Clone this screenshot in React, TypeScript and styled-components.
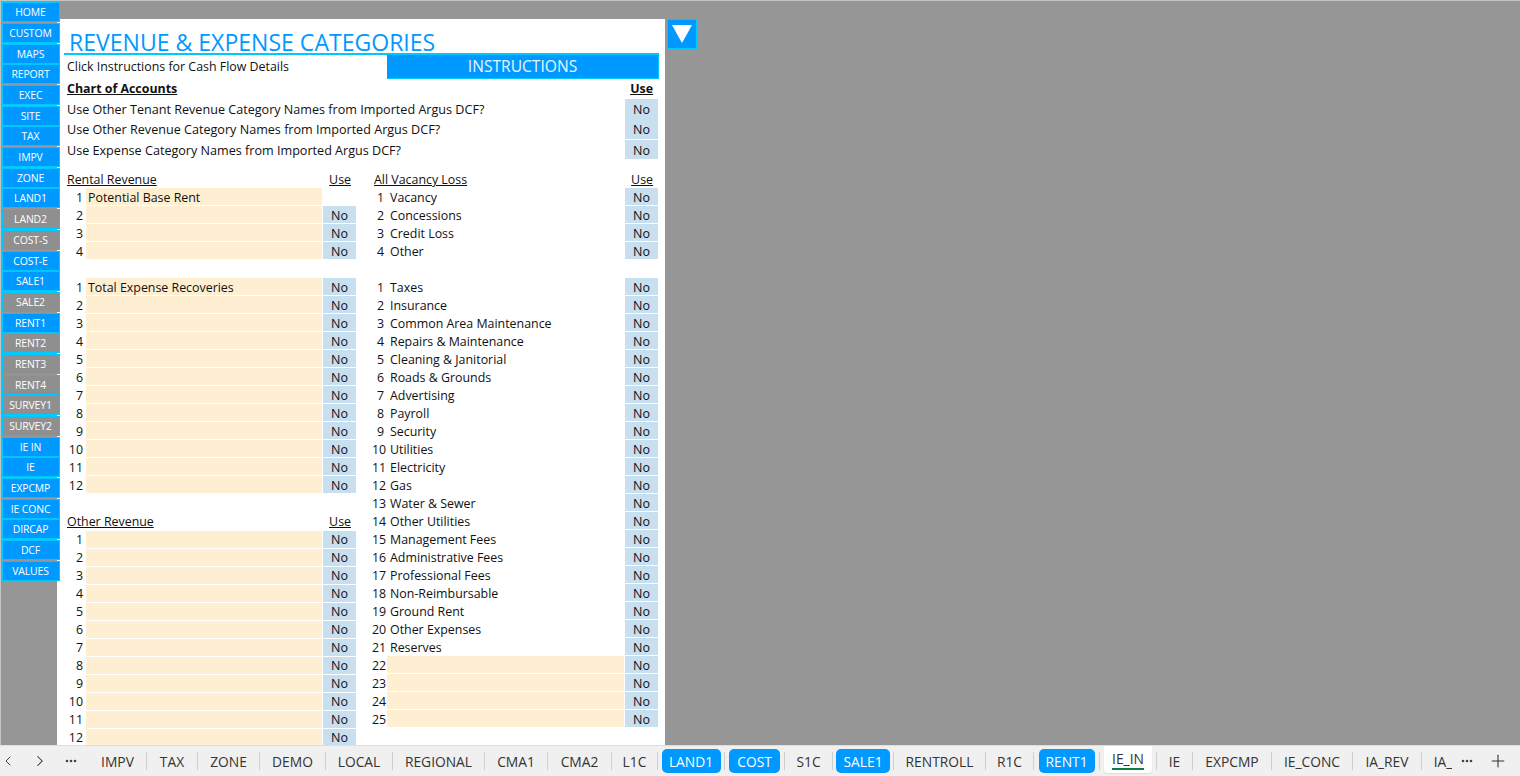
import React from "react";
import styled, { createGlobalStyle } from "styled-components";
import { ChevronLeft, ChevronRight, Plus } from "lucide-react";

const GlobalStyle = createGlobalStyle`
  html, body {
    margin: 0;
    padding: 0;
    overflow: hidden;
    background: #969696;
  }
  * {
    box-sizing: border-box;
  }
`;

const FONT = `"Open Sans", "Noto Sans", "Liberation Sans", sans-serif`;
const BLUE = "#0099ff";
const CYAN = "#00c8ff";
const GRAY = "#969696";

const Root = styled.div`
  width: 1520px;
  height: 776px;
  display: flex;
  flex-direction: column;
  overflow: hidden;
  font-family: ${FONT};
  color: #111;
`;

const Canvas = styled.div`
  flex: 1;
  min-height: 0;
  display: flex;
  background: ${GRAY};
  border-top: 1px solid #c4c4c4;
  border-left: 1px solid #c4c4c4;
`;

const Sidebar = styled.nav`
  width: 56px;
  flex: none;
  padding: 1.3px 0 0 1px;
  display: flex;
  flex-direction: column;
  gap: 0.7px;
  position: relative;
  z-index: 1;
`;

const NavButton = styled.div<{ $off?: boolean }>`
  width: 58px;
  height: 20px;
  flex: none;
  display: flex;
  align-items: center;
  justify-content: center;
  padding-right: 1px;
  background: ${p => (p.$off ? "#8f8f8f" : BLUE)};
  border: 1px solid ${CYAN};
  color: #fff;
  font-size: 10.4px;
  letter-spacing: -0.1px;
`;

const Sheet = styled.main`
  width: 608px;
  height: 726px;
  margin-top: 18px;
  flex: none;
  background: #fff;
  padding: 0 6px 0 7px;
  overflow: hidden;
`;

const Title = styled.h1`
  margin: 0;
  height: 36px;
  padding: 10px 0 0 5px;
  border-bottom: 2px solid ${CYAN};
  color: ${BLUE};
  font-size: 23.05px;
  font-weight: 400;
  line-height: 27px;
  white-space: nowrap;
`;

const InstructionRow = styled.div`
  height: 24px;
  display: flex;
  justify-content: space-between;
  padding-left: 3px;
  font-size: 12.4px;
  line-height: 24px;
`;

const InstructionButton = styled.div`
  width: 272px;
  height: 24px;
  background: ${BLUE};
  border-bottom: 1px solid ${CYAN};
  border-right: 1px solid ${CYAN};
  color: #e6f6ff;
  text-align: center;
  font-size: 15.6px;
  line-height: 22px;
`;

const Block = styled.section`
  padding: 0 1px 0 3px;
`;

const HeadRow = styled.div`
  height: 20px;
  display: flex;
  justify-content: space-between;
  font-size: 12.4px;
  font-weight: 700;
  line-height: 20px;
  text-decoration: underline;
  padding-right: 5px;
`;

const Question = styled.div`
  height: 20.4px;
  display: flex;
  justify-content: space-between;
  font-size: 12.6px;
  line-height: 22px;
`;

const QuestionNo = styled.div`
  width: 33px;
  height: 19.5px;
  background: #c8dfef;
  text-align: center;
  font-size: 12.5px;
  line-height: 22px;
`;

const Columns = styled.div`
  margin-top: 10px;
  display: grid;
  grid-template-columns: 292px 286px;
  column-gap: 16px;
`;

const Column = styled.div`
  display: flex;
  flex-direction: column;
`;

const Group = styled.div<{ $gap?: number; $line?: number }>`
  margin-bottom: ${p => p.$gap ?? 0}px;
  line-height: ${p => p.$line ?? 19}px;
`;

const GroupHead = styled.div<{ $left: number }>`
  height: 18px;
  display: flex;
  justify-content: space-between;
  padding: 0 5px 0 ${p => p.$left}px;
  font-size: 12.4px;
  text-decoration: underline;
`;

const Row = styled.div<{ $numWidth: number }>`
  height: 18px;
  display: grid;
  grid-template-columns: ${p => p.$numWidth}px 1fr 33px;
  column-gap: 1px;
  font-size: 12.4px;
`;

const Num = styled.div`
  text-align: right;
  padding-right: 2px;
`;

const Input = styled.div`
  height: 17px;
  background: #ffefd2;
  padding-left: 2px;
`;

const Label = styled.div`
  padding-left: 3px;
  white-space: nowrap;
`;

const NoCell = styled.div`
  height: 17px;
  background: #c8dfef;
  text-align: center;
  font-size: 12.5px;
`;

const DropButton = styled.div`
  width: 30px;
  height: 30px;
  margin: 18px 0 0 2px;
  flex: none;
  display: flex;
  align-items: center;
  justify-content: center;
  background: ${BLUE};
  border: 1px solid ${CYAN};
`;

const TabBar = styled.footer`
  height: 31px;
  flex: none;
  display: flex;
  align-items: center;
  background: #f0f0f0;
  border-top: 1px solid #dedede;
`;

const NavIcon = styled.div<{ $width: number }>`
  width: ${p => p.$width}px;
  flex: none;
  display: flex;
  align-items: center;
  justify-content: center;
  color: #333;
`;

const TabScroll = styled.div`
  width: 1374px;
  flex: none;
  height: 100%;
  padding-left: 11px;
  display: flex;
  align-items: center;
  overflow: hidden;
`;

const TabSlot = styled.div<{ $width: number }>`
  width: ${p => p.$width}px;
  flex: none;
  height: 100%;
  display: flex;
  align-items: center;
  justify-content: center;
  color: #333;
  font-size: 13.8px;
  white-space: nowrap;
`;

const TabPill = styled.div<{ $width: number }>`
  width: ${p => p.$width}px;
  height: 24px;
  display: flex;
  align-items: center;
  justify-content: center;
  border-radius: 5px;
  background: ${BLUE};
  color: #fff;
`;

const ActiveTab = styled.div`
  width: 48px;
  height: 28px;
  margin-top: -1px;
  align-self: flex-start;
  display: flex;
  align-items: center;
  justify-content: center;
  border-radius: 0 0 4px 4px;
  background: #fff;
  box-shadow: 0 1px 1px #dcdcdc;
`;

const ActiveLabel = styled.span`
  margin-top: 1px;
  border-bottom: 2px solid #107c41;
  line-height: 19px;
`;

const TabSep = styled.div`
  flex: none;
  width: 1px;
  height: 18px;
  background: #cfcfcf;
`;

const navItems: Array<[string, boolean?]> = [
  ["HOME"], ["CUSTOM"], ["MAPS"], ["REPORT"], ["EXEC"], ["SITE"], ["TAX"], ["IMPV"], ["ZONE"], ["LAND1"],
  ["LAND2", true], ["COST-S", true], ["COST-E"], ["SALE1"], ["SALE2", true], ["RENT1"], ["RENT2", true],
  ["RENT3", true], ["RENT4", true], ["SURVEY1", true], ["SURVEY2", true], ["IE IN"], ["IE"], ["EXPCMP"],
  ["IE CONC"], ["DIRCAP"], ["DCF"], ["VALUES"],
];

const questions = [
  "Use Other Tenant Revenue Category Names from Imported Argus DCF?",
  "Use Other Revenue Category Names from Imported Argus DCF?",
  "Use Expense Category Names from Imported Argus DCF?",
];

const vacancy = ["Vacancy", "Concessions", "Credit Loss", "Other"];

const expenses = [
  "Taxes", "Insurance", "Common Area Maintenance", "Repairs & Maintenance", "Cleaning & Janitorial",
  "Roads & Grounds", "Advertising", "Payroll", "Security", "Utilities", "Electricity", "Gas", "Water & Sewer",
  "Other Utilities", "Management Fees", "Administrative Fees", "Professional Fees", "Non-Reimbursable",
  "Ground Rent", "Other Expenses", "Reserves", "", "", "", "",
];

interface ITab {
  name: string;
  width: number;
  pill?: number;
  active?: boolean;
}

const tabs: ITab[] = [
  { name: "IMPV", width: 57 }, { name: "TAX", width: 50 }, { name: "ZONE", width: 61 }, { name: "DEMO", width: 65 },
  { name: "LOCAL", width: 66 }, { name: "REGIONAL", width: 91 }, { name: "CMA1", width: 62 }, { name: "CMA2", width: 63 },
  { name: "L1C", width: 45 }, { name: "LAND1", width: 66, pill: 59 }, { name: "COST", width: 59, pill: 51 },
  { name: "S1C", width: 47 }, { name: "SALE1", width: 60, pill: 54 }, { name: "RENTROLL", width: 91 },
  { name: "R1C", width: 47 }, { name: "RENT1", width: 65, pill: 56 }, { name: "IE_IN", width: 56, active: true },
  { name: "IE", width: 35 }, { name: "EXPCMP", width: 78 }, { name: "IE_CONC", width: 80 }, { name: "IA_REV", width: 68 },
  { name: "IA_", width: 42 },
];

const Dots = () => (
  <svg width="12" height="4" viewBox="0 0 12 4">
    <circle cx="2" cy="2" r="1.3" fill="#444" />
    <circle cx="6" cy="2" r="1.3" fill="#444" />
    <circle cx="10" cy="2" r="1.3" fill="#444" />
  </svg>
);

const renderRentRows = (count: number, first?: string, hideFirstNo?: boolean) =>
  Array.from({ length: count }, (_, i) => (
    <Row key={i} $numWidth={21}>
      <Num>{i + 1}</Num>
      <Input>{i === 0 ? first : ""}</Input>
      {hideFirstNo && i === 0 ? <div /> : <NoCell>No</NoCell>}
    </Row>
  ));

const renderRightRows = (items: string[]) =>
  items.map((item, i) => (
    <Row key={i} $numWidth={14}>
      <Num>{i + 1}</Num>
      {item ? <Label>{item}</Label> : <Input />}
      <NoCell>No</NoCell>
    </Row>
  ));

const renderTab = (t: ITab) => {
  if (t.pill) return <TabPill $width={t.pill}>{t.name}</TabPill>;
  if (t.active) return <ActiveTab><ActiveLabel>{t.name}</ActiveLabel></ActiveTab>;
  return t.name;
};

const App = () => (
  <Root>
    <GlobalStyle />
    <Canvas>
      <Sidebar>
        {navItems.map(([name, off]) => (
          <NavButton key={name} $off={off}>{name}</NavButton>
        ))}
      </Sidebar>
      <Sheet>
        <Title>REVENUE &amp; EXPENSE CATEGORIES</Title>
        <InstructionRow>
          Click Instructions for Cash Flow Details
          <InstructionButton>INSTRUCTIONS</InstructionButton>
        </InstructionRow>
        <Block>
          <HeadRow>
            <span>Chart of Accounts</span>
            <span>Use</span>
          </HeadRow>
          {questions.map(q => (
            <Question key={q}>
              {q}
              <QuestionNo>No</QuestionNo>
            </Question>
          ))}
        </Block>
        <Columns>
          <Column>
            <Group $gap={18}>
              <GroupHead $left={3}><span>Rental Revenue</span><span>Use</span></GroupHead>
              {renderRentRows(4, "Potential Base Rent", true)}
            </Group>
            <Group $gap={19}>{renderRentRows(12, "Total Expense Recoveries")}</Group>
            <Group $line={17}>
              <GroupHead $left={3}><span>Other Revenue</span><span>Use</span></GroupHead>
              {renderRentRows(12)}
            </Group>
          </Column>
          <Column>
            <Group $gap={18}>
              <GroupHead $left={2}><span>All Vacancy Loss</span><span>Use</span></GroupHead>
              {renderRightRows(vacancy)}
            </Group>
            <Group>{renderRightRows(expenses)}</Group>
          </Column>
        </Columns>
      </Sheet>
      <DropButton>
        <svg width="20" height="18" viewBox="0 0 20 18">
          <polygon points="0,0 20,0 10,18" fill="#fff" />
        </svg>
      </DropButton>
    </Canvas>
    <TabBar>
      <NavIcon $width={16}><ChevronLeft size={18} strokeWidth={1.4} /></NavIcon>
      <NavIcon $width={48}><ChevronRight size={18} strokeWidth={1.4} /></NavIcon>
      <NavIcon $width={14}><Dots /></NavIcon>
      <TabScroll>
        {tabs.map((t, i) => (
          <React.Fragment key={t.name}>
            <TabSlot $width={t.width}>{renderTab(t)}</TabSlot>
            {i < tabs.length - 1 && <TabSep />}
          </React.Fragment>
        ))}
      </TabScroll>
      <NavIcon $width={29}><Dots /></NavIcon>
      <NavIcon $width={34}><Plus size={20} strokeWidth={1.3} /></NavIcon>
    </TabBar>
  </Root>
);

export default App;
